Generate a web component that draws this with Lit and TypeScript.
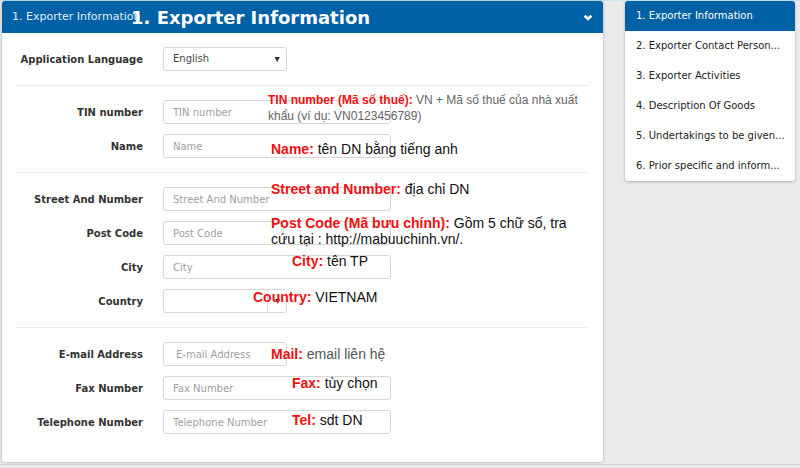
import { LitElement, html, css, nothing } from "lit";
import { customElement } from "lit/decorators.js";
import { classMap } from "lit/directives/class-map.js";
import { styleMap } from "lit/directives/style-map.js";

interface Note {
  term: string;
  text: string;
  x: number;
  y: number;
  tone?: "small" | "soft";
}

interface Field {
  id: string;
  label: string;
  kind: "text" | "email" | "select" | "combo";
  short?: boolean;
  options?: string[];
  note?: Note;
}

const GROUPS: Field[][] = [
  [{ id: "lang", label: "Application Language", kind: "select", short: true, options: ["English"] }],
  [
    {
      id: "tin", label: "TIN number", kind: "text",
      note: { term: "TIN number (Mã số thuế):", text: "VN + Mã số thuế của nhà xuất khẩu (ví dụ: VN0123456789)", x: 105, y: -8, tone: "small" },
    },
    { id: "name", label: "Name", kind: "text", note: { term: "Name:", text: "tên DN bằng tiếng anh", x: 108, y: 7 } },
  ],
  [
    { id: "street", label: "Street And Number", kind: "text", note: { term: "Street and Number:", text: "địa chỉ DN", x: 108, y: -6 } },
    {
      id: "post", label: "Post Code", kind: "text",
      note: { term: "Post Code (Mã bưu chính):", text: "Gồm 5 chữ số, tra cứu tại : http://mabuuchinh.vn/.", x: 108, y: -6 },
    },
    { id: "city", label: "City", kind: "text", note: { term: "City:", text: "tên TP", x: 129, y: -2 } },
    { id: "country", label: "Country", kind: "combo", short: true, options: [""], note: { term: "Country:", text: "VIETNAM", x: 90, y: 0 } },
  ],
  [
    { id: "email", label: "E-mail Address", kind: "email", short: true, note: { term: "Mail:", text: "email liên hệ", x: 108, y: 4, tone: "soft" } },
    { id: "fax", label: "Fax Number", kind: "text", note: { term: "Fax:", text: "tùy chọn", x: 129, y: -1 } },
    { id: "tel", label: "Telephone Number", kind: "text", note: { term: "Tel:", text: "sdt DN", x: 129, y: 2 } },
  ],
];

const STEPS = [
  "1. Exporter Information",
  "2. Exporter Contact Person...",
  "3. Exporter Activities",
  "4. Description Of Goods",
  "5. Undertakings to be given...",
  "6. Prior specific and inform...",
];

@customElement("form-row")
export class FormRow extends LitElement {
  static properties = { field: { attribute: false } };
  declare field: Field;

  static styles = css`
    :host {
      display: grid;
      grid-template-columns: 127px minmax(0, 1fr);
      column-gap: 20px;
      align-items: center;
      height: 24px;
      font-size: 10px;
    }
    label {
      padding-top: 2px;
      font-weight: bold;
      text-align: right;
      white-space: nowrap;
      color: #333;
    }
    .field {
      position: relative;
    }
    .box {
      position: relative;
      width: 228px;
      max-width: 100%;
    }
    .box.short {
      width: 124px;
    }
    .control {
      display: block;
      box-sizing: border-box;
      width: 100%;
      height: 24px;
      margin: 0;
      padding: 0 9px;
      border: 1px solid #d6d6d6;
      border-radius: 3px;
      background: #fff;
      color: #444;
      font: inherit;
      appearance: none;
      outline: none;
    }
    .control.email {
      padding-left: 12px;
    }
    .control::placeholder {
      color: #a0a0a0;
      opacity: 1;
    }
    .arrow {
      position: absolute;
      right: 0;
      top: 0;
      width: 20px;
      height: 24px;
      box-sizing: border-box;
      pointer-events: none;
    }
    .arrow.split {
      border-left: 1px solid #ddd;
    }
    .note {
      position: absolute;
      width: 312px;
      margin: 0;
      font: 14px/16px "Liberation Sans", Arial, sans-serif;
      color: #111;
      pointer-events: none;
    }
    .note.small {
      font-size: 12px;
      color: #666;
    }
    .note.soft {
      color: #555;
    }
    .term {
      color: #f01010;
    }
  `;

  private control(f: Field) {
    if (f.kind === "select" || f.kind === "combo") {
      return html`
        <select class="control" id=${f.id}>
          ${f.options?.map((o) => html`<option>${o}</option>`)}
        </select>
        <svg class=${classMap({ arrow: true, split: f.kind === "combo" })} viewBox="0 0 20 24" aria-hidden="true">
          <path d="M7.5 10h5.4l-2.7 5z" fill="#333" />
        </svg>
      `;
    }
    return html`<input
      class=${classMap({ control: true, email: f.kind === "email" })}
      id=${f.id}
      type=${f.kind}
      placeholder=${f.label}
    />`;
  }

  render() {
    const f = this.field;
    const n = f.note;
    return html`
      <label for=${f.id}>${f.label}</label>
      <div class="field">
        <div class=${classMap({ box: true, short: !!f.short })}>${this.control(f)}</div>
        ${n
          ? html`<p
              class=${classMap({ note: true, small: n.tone === "small", soft: n.tone === "soft" })}
              style=${styleMap({ left: `${n.x}px`, top: `${n.y}px` })}
            ><b class="term">${n.term}</b> ${n.text}</p>`
          : nothing}
      </div>
    `;
  }
}

@customElement("app-root")
export class AppRoot extends LitElement {
  static styles = css`
    :host {
      display: block;
      box-sizing: border-box;
      min-height: 100vh;
      border-top: 1px solid #c8e6f2;
      background: #eaeaea;
      font: 11px/16px "DejaVu Sans", Verdana, sans-serif;
      color: #333;
    }
    .page {
      display: grid;
      grid-template-columns: minmax(0, 1fr) 170px;
      column-gap: 22px;
      align-items: start;
      padding: 0 5px 2px 2px;
      border-bottom: 1px solid #cfd1d3;
    }
    .panel {
      background: #fff;
      border-radius: 3px;
      box-shadow: 0 0 3px rgba(0, 0, 0, 0.3);
    }
    .head {
      position: relative;
      display: flex;
      align-items: center;
      justify-content: space-between;
      height: 32px;
      padding: 0 10px;
      border-radius: 3px 3px 0 0;
      background: #0061a6;
      color: #e4eff7;
    }
    .overlay {
      position: absolute;
      left: 129px;
      top: 5px;
      margin: 0;
      font-size: 18px;
      line-height: 24px;
      color: #fff;
      white-space: nowrap;
    }
    .toggle {
      display: flex;
      padding: 0;
      border: 0;
      background: none;
    }
    .group {
      display: grid;
      row-gap: 10px;
      margin: 0 14px;
      padding: 14px 0;
      border-bottom: 1px solid #ececec;
    }
    .group:last-child {
      border-bottom: 0;
      padding-bottom: 28px;
    }
    .steps {
      display: grid;
      overflow: hidden;
      background: #fff;
      border-radius: 3px;
      box-shadow: 0 1px 3px rgba(0, 0, 0, 0.25);
      font-size: 10px;
    }
    .step {
      padding: 7px 11px;
      color: #222;
      text-decoration: none;
      white-space: nowrap;
    }
    .step.current {
      background: #0061a6;
      color: #fff;
    }
  `;

  render() {
    return html`
      <div class="page">
        <form class="panel">
          <div class="head">
            <span>1. Exporter Information</span>
            <h1 class="overlay">1. Exporter Information</h1>
            <button class="toggle" type="button" aria-label="Collapse section">
              <svg width="10" height="8" viewBox="0 0 10 8" aria-hidden="true">
                <path d="M1.6 2.7 5 5.9 8.4 2.7" fill="none" stroke="#fff" stroke-width="2.6" />
              </svg>
            </button>
          </div>
          ${GROUPS.map(
            (g) => html`<div class="group">${g.map((f) => html`<form-row .field=${f}></form-row>`)}</div>`
          )}
        </form>
        <nav class="steps" aria-label="Form sections">
          ${STEPS.map(
            (s, i) => html`<a href="#" class=${classMap({ step: true, current: i === 0 })}>${s}</a>`
          )}
        </nav>
      </div>
    `;
  }
}
